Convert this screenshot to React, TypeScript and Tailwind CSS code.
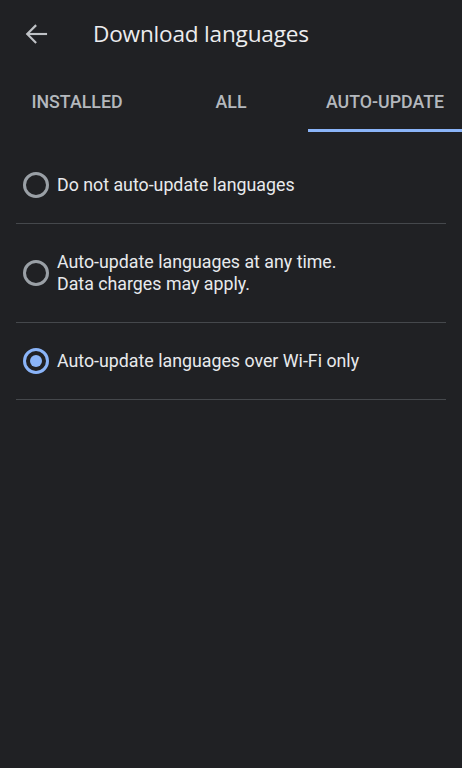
import React, { useState } from "react";

const options = [
  { id: "never", lines: ["Do not auto-update languages"] },
  { id: "any", lines: ["Auto-update languages at any time.", "Data charges may apply."] },
  { id: "wifi", lines: ["Auto-update languages over Wi-Fi only"] },
];

const tabs = ["INSTALLED", "ALL", "AUTO-UPDATE"];

function Radio({ checked }: { checked: boolean }) {
  if (checked) {
    return (
      <div className="w-[26px] h-[26px] rounded-full border-[3px] border-[#8ab4f8] flex items-center justify-center shrink-0">
        <div className="w-[12px] h-[12px] rounded-full bg-[#8ab4f8]" />
      </div>
    );
  }
  return <div className="w-[26px] h-[26px] rounded-full border-[3px] border-[#9aa0a6] shrink-0" />;
}

export default function App() {
  const [tab, setTab] = useState(2);
  const [choice, setChoice] = useState("wifi");

  return (
    <div className="bg-[#202124] h-screen w-full font-['Roboto',sans-serif] text-[#e8eaed]">
      {/* Header */}
      <div className="h-[68px] flex items-center">
        <button className="w-[72px] h-full flex items-center pl-[21px] text-[#bfc2c6]">
          <svg width="30" height="30" viewBox="0 0 24 24" fill="none" stroke="currentColor" strokeWidth="1.7" strokeLinecap="square">
            <path d="M20 12H5.5" />
            <path d="M11.5 5.5L5 12l6.5 6.5" />
          </svg>
        </button>
        <h1 className="ml-[21px] text-[22.6px] font-['Open_Sans',sans-serif] tracking-[-0.2px] text-[#ececee]">
          Download languages
        </h1>
      </div>

      {/* Tabs */}
      <div className="grid grid-cols-3">
        {tabs.map((t, i) => (
          <button key={t} onClick={() => setTab(i)} className="flex flex-col">
            <span className="h-[61px] pt-[7px] flex items-center justify-center text-[17.8px] font-medium text-[#b4b8bd]">
              {t}
            </span>
            <span className={i === tab ? "h-[3px] bg-[#8ab4f8]" : "h-[3px]"} />
          </button>
        ))}
      </div>

      {/* Options */}
      <div className="pt-[15px]">
        {options.map((o) => (
          <div key={o.id} onClick={() => setChoice(o.id)}>
            <div className="flex items-center gap-[8px] pl-[23px] pr-4">
              <Radio checked={choice === o.id} />
              <div className="py-[27px] text-[17.8px] leading-[22px]">
                {o.lines.map((l) => (
                  <div key={l}>{l}</div>
                ))}
              </div>
            </div>
            <div className="mx-4 h-px bg-[#45484c]" />
          </div>
        ))}
      </div>
    </div>
  );
}
